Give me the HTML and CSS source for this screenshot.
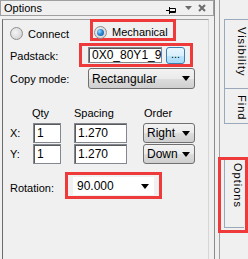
FILE: index.html
```html
<!DOCTYPE html>
<html lang="en">
<head>
    <meta charset="UTF-8">
    <title>Options</title>
    <link rel="stylesheet" href="styles.css">
</head>
<body>
    <div class="dock">
        <div class="pane">
            <div class="titlebar">
                <span class="title">Options</span>
                <span class="tb-icons">
                    <svg class="pin" width="10" height="7" viewBox="0 0 10 7">
                        <path d="M0 3.5H3.5M3.5 0V7" stroke="#000" stroke-width="1" fill="none"/>
                        <path d="M4 1.5H9.5V5.5H4" stroke="#000" stroke-width="1" fill="none"/>
                        <path d="M4 4.5H9" stroke="#000" stroke-width="1"/>
                    </svg>
                    <svg class="menu" width="7" height="4" viewBox="0 0 7 4"><path d="M0 0H7L3.5 4Z" fill="#6b6b6b"/></svg>
                    <svg class="close" width="8" height="8" viewBox="0 0 8 8"><path d="M1 1L7 7M7 1L1 7" stroke="#6b6b6b" stroke-width="2"/></svg>
                </span>
            </div>
            <div class="panel">
                <div class="row r-radio">
                    <label class="radio connect"><span class="dot"></span>Connect</label>
                    <label class="radio hl hl-mech"><span class="dot on"></span>Mechanical</label>
                </div>
                <div class="row r-pad">
                    <span class="lbl lbl-pad">Padstack:</span>
                    <div class="hl hl-pad">
                        <div class="field pad-field">0X0_80Y1_9</div>
                        <div class="dots">...</div>
                    </div>
                </div>
                <div class="row r-copy">
                    <span class="lbl lbl-copy">Copy mode:</span>
                    <div class="combo copy-combo"><span>Rectangular</span><i class="arrow"></i></div>
                </div>
                <div class="row r-head">
                    <span class="lbl lbl-axis"></span>
                    <span class="c-qty head-qty">Qty</span>
                    <span class="c-spacing">Spacing</span>
                    <span class="c-order">Order</span>
                </div>
                <div class="row r-grid r-x">
                    <span class="lbl lbl-axis">X:</span>
                    <div class="field c-qty">1</div>
                    <div class="field c-spacing">1.270</div>
                    <div class="combo c-order"><span>Right</span><i class="arrow"></i></div>
                </div>
                <div class="row r-grid r-y">
                    <span class="lbl lbl-axis">Y:</span>
                    <div class="field c-qty">1</div>
                    <div class="field c-spacing">1.270</div>
                    <div class="combo c-order"><span>Down</span><i class="arrow"></i></div>
                </div>
                <div class="row r-rot">
                    <span class="lbl lbl-rot">Rotation:</span>
                    <div class="hl hl-rot">
                        <div class="field rot-combo"><span>90.000</span><i class="arrow"></i></div>
                    </div>
                </div>
            </div>
        </div>
        <div class="splitter"></div>
        <div class="tabs">
            <div class="tab tab-vis"><span>Visibility</span></div>
            <div class="tab tab-find"><span>Find</span></div>
            <div class="tab-gap"></div>
            <div class="hl hl-tab">
                <div class="tab tab-opt"><span>Options</span></div>
            </div>
        </div>
    </div>
</body>
</html>
```

FILE: styles.css
```css
body {
    margin: 0;
    background: #f0f0f0;
    font-family: "Liberation Sans", Arial, sans-serif;
    font-size: 11px;
    color: #000;
}

.dock {
    display: flex;
    width: 248px;
    height: 259px;
    overflow: hidden;
}

/* colonne principale */
.pane {
    width: 215px;
    display: flex;
    flex-direction: column;
}

.titlebar {
    height: 14px;
    border: 1px solid #a0a0a0;
    display: flex;
    align-items: center;
    padding-left: 3px;
}

.title {
    flex: 1;
}

.tb-icons {
    display: flex;
    align-items: center;
}

.pin {
    margin-top: 4px;
    margin-right: 9px;
}

.menu {
    margin-right: 6px;
}

.close {
    margin-right: 7px;
}

.panel {
    margin-top: 3px;
    margin-left: 2px;
    width: 198px;
    flex: 1;
    border-left: 1px solid #6d6d6d;
    border-top: 1px solid #a0a0a0;
    border-right: 1px solid #d5d5d5;
    padding-left: 7px;
    display: flex;
    flex-direction: column;
}

.row {
    display: flex;
    align-items: center;
}

.lbl {
    flex: none;
}

/* cadres rouges */
.hl {
    border: 3px solid #ee3a3a;
    box-sizing: border-box;
}

.r-radio {
    margin-top: -1px;
    height: 22px;
}

.radio {
    display: flex;
    align-items: center;
}

.connect {
    width: 80px;
    padding-top: 7px;
}

.dot {
    width: 11px;
    height: 11px;
    border: 1px solid #8e8f8f;
    border-radius: 50%;
    background: radial-gradient(circle at 40% 40%, #f4f4f4 0%, #d8d8d8 70%, #c8c8c8 100%);
    margin-right: 5px;
    box-sizing: content-box;
    position: relative;
}

.dot.on::after {
    content: "";
    position: absolute;
    left: 2px;
    top: 2px;
    width: 7px;
    height: 7px;
    border-radius: 50%;
    background: radial-gradient(circle at 35% 35%, #9fd9ff 0%, #2b8ad6 45%, #154f85 100%);
}

.hl-mech {
    width: 86px;
    height: 22px;
    padding-left: 1px;
    padding-top: 4px;
}

.r-pad {
    margin-top: 2px;
    height: 24px;
}

.lbl-pad {
    width: 69px;
    padding-top: 1px;
}

.hl-pad {
    width: 114px;
    height: 24px;
    display: flex;
    align-items: center;
    padding-left: 6px;
}

.field {
    background: #fff;
    border: 1px solid #828790;
    box-shadow: inset 1px 1px 0 #5a5a5a;
    box-sizing: border-box;
    padding-left: 3px;
    display: flex;
    align-items: center;
}

.pad-field {
    width: 74px;
    height: 16px;
    font-size: 12px;
}

.dots {
    margin-left: 4px;
    width: 19px;
    height: 17px;
    box-sizing: border-box;
    border: 1px solid #3c7fb1;
    border-radius: 3px;
    background: linear-gradient(#eaf6fd 0%, #d9f0fc 50%, #bee6fd 51%, #a7d9f5 100%);
    text-align: center;
    line-height: 12px;
}

.r-copy {
    margin-top: 1px;
    height: 21px;
}

.lbl-copy {
    width: 78px;
}

.combo {
    height: 100%;
    box-sizing: border-box;
    border: 1px solid #707070;
    border-radius: 3px;
    background: linear-gradient(#f2f2f2 0%, #ebebeb 50%, #dddddd 51%, #cfcfcf 100%);
    display: flex;
    align-items: center;
    padding-left: 3px;
    font-size: 12px;
}

.combo span,
.rot-combo span {
    flex: 1;
}

.arrow {
    width: 0;
    height: 0;
    border-left: 4px solid transparent;
    border-right: 4px solid transparent;
    border-top: 5px solid #000;
    margin-right: 4px;
}

.copy-combo {
    width: 107px;
}

.r-head {
    margin-top: 15px;
    height: 17px;
}

.lbl-axis {
    width: 23px;
}

.c-qty {
    width: 28px;
}

.c-spacing {
    width: 53px;
    margin-left: 13px;
}

.c-order {
    width: 52px;
    margin-left: 16px;
}

.head-qty {
    margin-left: -1px;
    margin-right: 1px;
}

.r-head .c-order {
    padding-left: 1px;
}

.r-grid {
    height: 20px;
    font-size: 12px;
}

.r-grid .lbl {
    font-size: 11px;
}

.r-grid .field {
    height: 20px;
}

.r-x {
    margin-top: 2px;
}

.r-y {
    margin-top: 1px;
}

.r-rot {
    margin-top: 8px;
    height: 27px;
}

.lbl-rot {
    width: 55px;
    padding-top: 4px;
}

.hl-rot {
    width: 97px;
    height: 27px;
    padding-left: 5px;
    padding-top: 2px;
}

.rot-combo {
    width: 81px;
    height: 18px;
    font-size: 12px;
    border-color: #fff;
    box-shadow: none;
}

/* séparateur */
.splitter {
    width: 4px;
    border-left: 1px solid #8a8a8a;
    border-right: 1px solid #a0a0a0;
}

/* onglets verticaux */
.tabs {
    flex: 1;
    display: flex;
    flex-direction: column;
    padding-left: 4px;
}

.tab {
    border: 1px solid #9aaabb;
    border-right: none;
    writing-mode: vertical-rl;
    letter-spacing: 1px;
    font-size: 11px;
    padding-left: 7px;
    box-sizing: border-box;
}

.tab-vis {
    margin-top: 19px;
    height: 70px;
    padding-top: 7px;
}

.tab-find {
    margin-top: -1px;
    height: 36px;
    padding-top: 6px;
}

.tab-gap {
    height: 33px;
}

.hl-tab {
    margin-left: -6px;
    width: 30px;
    height: 76px;
    padding: 0 0 5px 3px;
}

.tab-opt {
    height: 68px;
    border-top: none;
    padding-top: 3px;
}
```
